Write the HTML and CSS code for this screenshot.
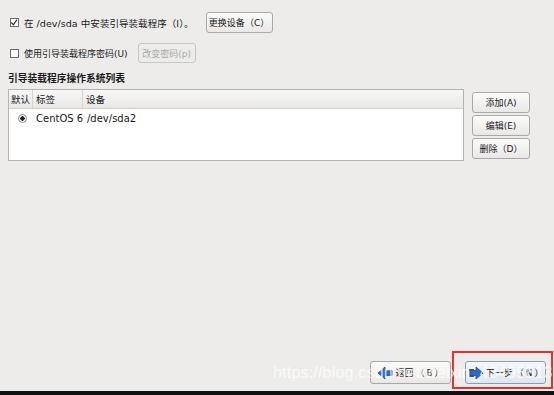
FILE: index.html
```html
<!DOCTYPE html>
<html lang="zh">
<head>
<meta charset="utf-8">
<link rel="stylesheet" href="styles.css">
</head>
<body>
<div class="screen">
  <div class="content">
    <div class="opt-row first">
      <span class="check checked"><svg viewBox="0 0 9 9" width="9" height="9"><path d="M1.5 4.5 L3.8 7 L7.8 1.2" fill="none" stroke="#333" stroke-width="1.3"/></svg></span>
      <span class="label wide">在 /dev/sda 中安装引导装载程序<span class="cjk">（</span>I<span class="cjk">）。</span></span>
      <button class="btn btn-change">更换设备<span class="cjk">（</span>C<span class="cjk">）</span></button>
    </div>
    <div class="opt-row second">
      <span class="check"></span>
      <span class="label">使用引导装载程序密码(U)</span>
      <button class="btn btn-disabled">改变密码(p)</button>
    </div>
    <div class="section-title">引导装载程序操作系统列表</div>
    <div class="list-area">
      <div class="list">
        <div class="list-head">
          <span class="col col-default">默认</span>
          <span class="col col-label">标签</span>
          <span class="col col-dev">设备</span>
        </div>
        <div class="list-row">
          <span class="col col-default"><span class="radio"></span></span>
          <span class="col col-label">CentOS 6</span>
          <span class="col col-dev">/dev/sda2</span>
        </div>
      </div>
      <div class="side-buttons">
        <button class="btn side">添加(A)</button>
        <button class="btn side">编辑(E)</button>
        <button class="btn side">删除<span class="cjk">（</span>D<span class="cjk">）</span></button>
      </div>
    </div>
  </div>
  <div class="footer">
    <button class="btn nav"><svg class="ico" viewBox="0 0 16 14" width="16" height="14"><path d="M1 7 L8 1 L8 4.5 L15 4.5 L15 9.5 L8 9.5 L8 13 Z" fill="#2f6bc4" stroke="#1d4f9a" stroke-width="0.8"/></svg>返回<span class="cjk">（</span>B<span class="cjk">）</span></button>
    <button class="btn nav next"><svg class="ico" viewBox="0 0 16 14" width="16" height="14"><rect x="1" y="3" width="5" height="8" fill="#555"/><path d="M15 7 L8 1 L8 4.5 L2 4.5 L2 9.5 L8 9.5 L8 13 Z" fill="#2f6bc4" stroke="#1d4f9a" stroke-width="0.8"/></svg>下一步<span class="cjk">（</span>N<span class="cjk">）</span></button>
  </div>
  <div class="bottom-bar"></div>
  <div class="highlight"></div>
  <div class="watermark">https://blog.csdn.net/weixin_43495813</div>
</div>
</body>
</html>
```
FILE: styles.css
```css
html, body {
  margin: 0;
  padding: 0;
}
body {
  background: #edecea;
  font-family: "DejaVu Sans", "Noto Sans CJK SC", sans-serif;
  font-size: 9px;
  color: #1a1a1a;
}
.cjk {
  font-family: "Noto Sans CJK SC", sans-serif;
}
.screen {
  position: relative;
  width: 554px;
  height: 395px;
  display: flex;
  flex-direction: column;
  overflow: hidden;
}
.content {
  flex: 1;
  padding: 12px 0 0 10px;
}
.opt-row {
  display: flex;
  align-items: center;
}
.opt-row.second {
  margin-top: 10px;
}
.check {
  width: 9px;
  height: 9px;
  border: 1px solid #6b6b6b;
  background: #fff;
  box-sizing: border-box;
  display: inline-flex;
  margin-right: 5px;
}
.check svg {
  margin: -1px 0 0 -1px;
}
.label {
  white-space: nowrap;
}
.label.wide {
  font-size: 9.5px;
  letter-spacing: 0.05px;
}
.btn {
  font-family: "DejaVu Sans", "Noto Sans CJK SC", sans-serif;
  font-size: 9px;
  color: #1a1a1a;
  border: 1px solid #a9a9a7;
  border-radius: 3px;
  background: linear-gradient(#fbfbfa, #e9e8e6);
  padding: 0;
  display: inline-flex;
  align-items: center;
  justify-content: center;
  box-sizing: border-box;
  white-space: nowrap;
}
.btn-change {
  width: 67px;
  height: 21px;
  margin-left: 12px;
}
.btn-disabled {
  width: 58px;
  height: 20px;
  margin-left: 10px;
  color: #a8a8a6;
  border-color: #c8c7c5;
  background: #edecea;
}
.section-title {
  margin-top: 8px;
  font-weight: bold;
  font-size: 9.75px;
  margin-left: -2px;
}
.list-area {
  display: flex;
  margin-top: 4px;
  margin-left: -2px;
}
.list {
  width: 456px;
  height: 72px;
  border: 1px solid #b4b3b1;
  background: #fff;
  box-sizing: border-box;
}
.list-head {
  height: 18px;
  display: flex;
  align-items: center;
  background: linear-gradient(#f7f7f6, #e9e8e6);
  border-bottom: 1px solid #cfcecc;
  font-size: 9.5px;
}
.list-head .col {
  height: 100%;
  display: flex;
  align-items: center;
  box-sizing: border-box;
}
.col-default {
  width: 24px;
  padding-left: 2px;
  border-right: 1px solid #d6d5d3;
}
.col-label {
  width: 50px;
  padding-left: 3px;
}
.list-head .col-label {
  border-right: 1px solid #d6d5d3;
}
.col-dev {
  padding-left: 3px;
}
.list-row {
  display: flex;
  align-items: center;
  height: 19px;
  font-size: 10px;
}
.list-row .col {
  box-sizing: border-box;
  border: none;
  display: flex;
  align-items: center;
}
.list-row .col-default {
  justify-content: center;
  padding-left: 0;
  width: 26px;
}
.list-row .col-label {
  width: 51px;
  padding-left: 1px;
}
.list-row .col-dev {
  padding-left: 1px;
}
.radio {
  width: 9px;
  height: 9px;
  border: 1px solid #8a8a8a;
  border-radius: 50%;
  box-sizing: border-box;
  background: radial-gradient(circle, #222 0 2px, #fff 2.4px);
}
.side-buttons {
  display: flex;
  flex-direction: column;
  gap: 2px;
  margin-left: 8px;
  margin-top: 3px;
}
.side {
  width: 58px;
  height: 21px;
}
.footer {
  display: flex;
  justify-content: flex-end;
  gap: 14px;
  padding: 0 8px 7px 0;
}
.nav {
  width: 81px;
  height: 23px;
  gap: 2px;
}
.nav.next {
  background: linear-gradient(#f3f6fb, #dfe6f0);
  border-color: #8a9bb8;
}
.ico {
  flex: none;
}
.bottom-bar {
  height: 4px;
  background: #111;
}
.highlight {
  position: absolute;
  left: 452px;
  top: 351px;
  width: 101px;
  height: 38px;
  border: 2px solid #e8302f;
  box-sizing: border-box;
}
.watermark {
  position: absolute;
  left: 273px;
  top: 364px;
  font-family: "Liberation Sans", sans-serif;
  font-size: 16px;
  color: rgba(255, 255, 255, 0.75);
  white-space: nowrap;
  letter-spacing: 0.2px;
  pointer-events: none;
}
```
